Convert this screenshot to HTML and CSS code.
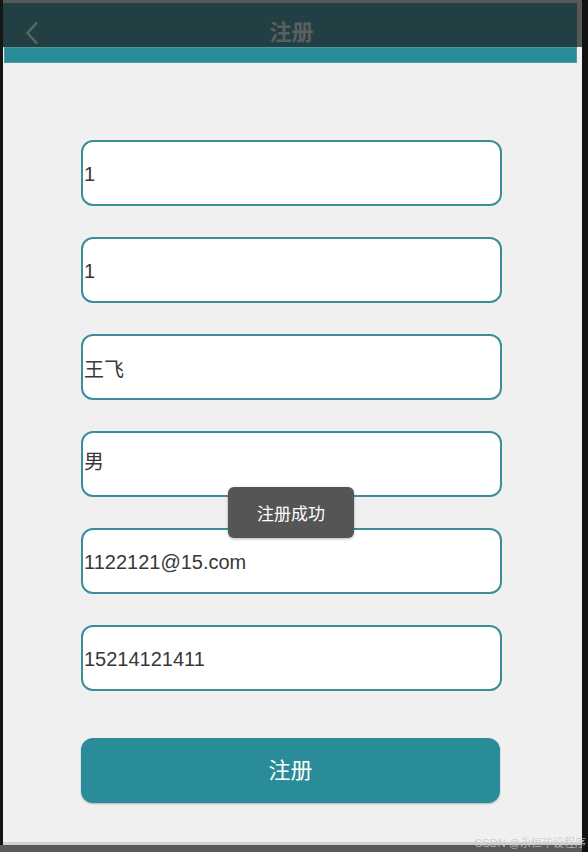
FILE: index.html
```html
<!DOCTYPE html>
<html lang="zh">
<head>
<meta charset="utf-8">
<title>注册</title>
<link rel="stylesheet" href="styles.css">
</head>
<body>
<div class="frame">
  <div class="middle">
    <div class="edge-left"></div>
    <div class="screen">
      <div class="topbar">
        <div class="header">
          <svg class="back" width="14" height="24" viewBox="0 0 14 24"><path d="M12 1.5 L2.5 12 L12 22.5" fill="none" stroke="#5e6466" stroke-width="2.4"/></svg>
          <div class="title">注册</div>
        </div>
      </div>
      <div class="strip"></div>
      <div class="form">
        <div class="field">1</div>
        <div class="field">1</div>
        <div class="field">王飞</div>
        <div class="field field-up">男</div>
        <div class="field">1122121@15.com</div>
        <div class="field">15214121411</div>
        <div class="submit">注册</div>
      </div>
      <div class="bottom-line"></div>
    </div>
  </div>
  <div class="bottom-bar"></div>
  <div class="toast">注册成功</div>
  <div class="watermark">CSDN @永恒毕设程序</div>
</div>
</body>
</html>
```
FILE: styles.css
```css
html, body {
  margin: 0;
  padding: 0;
}
body {
  background: #121212;
  width: 588px;
  height: 852px;
  overflow: hidden;
  font-family: "Liberation Sans", "Noto Sans CJK SC", sans-serif;
}
.frame {
  position: relative;
  width: 582px;
  height: 852px;
  display: flex;
  flex-direction: column;
  background: #595959;
}
.middle {
  display: flex;
  height: 845px;
}
.edge-left {
  width: 3px;
  background: #151515;
}
.screen {
  flex: 1;
  display: flex;
  flex-direction: column;
  background: #f0f0f0;
}
.topbar {
  height: 47px;
  box-sizing: border-box;
  padding: 3px 5px 0 0;
  background: #585858;
}
.header {
  height: 44px;
  background: #223f43;
  position: relative;
  display: flex;
  justify-content: center;
  align-items: flex-start;
}
.back {
  position: absolute;
  left: 22px;
  top: 18px;
}
.title {
  margin-top: 17px;
  margin-left: 3px;
  font-size: 22px;
  line-height: 26px;
  font-weight: bold;
  color: #5b5f60;
}
.strip {
  height: 16px;
  box-sizing: border-box;
  margin: 0 5px 0 1px;
  background: #2a8c98;
  border: 1px solid #4c9aa4;
}
.form {
  flex: 1;
  display: flex;
  flex-direction: column;
  padding: 77px 80px 0 78px;
  gap: 31px;
}
.field {
  height: 66px;
  box-sizing: border-box;
  border: 2px solid #3b8e99;
  border-radius: 12px;
  background: #ffffff;
  display: flex;
  align-items: center;
  padding-left: 1px;
  padding-top: 3px;
  font-size: 20px;
  color: #383838;
}
.field-up {
  padding-top: 0;
  padding-bottom: 8px;
}
.submit {
  margin-top: 16px;
  height: 65px;
  width: 419px;
  box-sizing: border-box;
  padding-bottom: 6px;
  border-radius: 12px;
  background: #2a8c98;
  display: flex;
  align-items: center;
  justify-content: center;
  color: #ffffff;
  font-size: 22px;
  box-shadow: 0 1px 2px rgba(0,0,0,0.25);
}
.bottom-line {
  height: 3px;
  background: #d2d2d2;
}
.bottom-bar {
  height: 7px;
  background: #595959;
}
.toast {
  position: absolute;
  left: 228px;
  top: 487px;
  width: 126px;
  height: 51px;
  box-sizing: border-box;
  border-radius: 6px;
  background: #555555;
  color: #ffffff;
  font-size: 17px;
  display: flex;
  align-items: center;
  justify-content: center;
  box-shadow: 0 1px 3px rgba(0,0,0,0.3);
}
.watermark {
  position: absolute;
  right: -4px;
  top: 834px;
  font-size: 11px;
  color: rgba(200,200,200,0.85);
  white-space: nowrap;
}
```
